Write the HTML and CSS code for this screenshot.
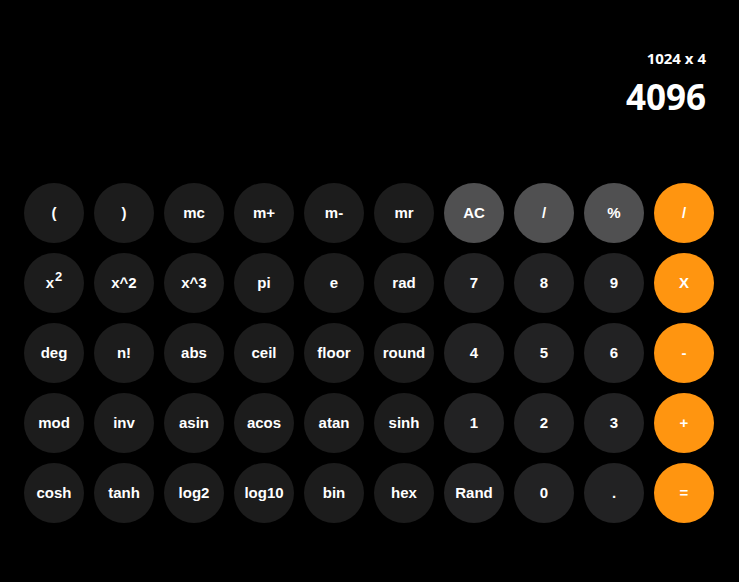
FILE: index.html
```html
<!DOCTYPE html>
<html>
<head>
<meta charset="utf-8">
<link rel="stylesheet" href="styles.css">
</head>
<body>
<div class="calc">
  <div class="display">
    <div class="expr">1024 x 4</div>
    <div class="result">4096</div>
  </div>
  <div class="keys">
    <button class="k fn">(</button>
    <button class="k fn">)</button>
    <button class="k fn">mc</button>
    <button class="k fn">m+</button>
    <button class="k fn">m-</button>
    <button class="k fn">mr</button>
    <button class="k gray">AC</button>
    <button class="k gray">/</button>
    <button class="k gray">%</button>
    <button class="k op">/</button>

    <button class="k fn"><span>x<sup>2</sup></span></button>
    <button class="k fn">x^2</button>
    <button class="k fn">x^3</button>
    <button class="k fn">pi</button>
    <button class="k fn">e</button>
    <button class="k fn">rad</button>
    <button class="k num">7</button>
    <button class="k num">8</button>
    <button class="k num">9</button>
    <button class="k op">X</button>

    <button class="k fn">deg</button>
    <button class="k fn">n!</button>
    <button class="k fn">abs</button>
    <button class="k fn">ceil</button>
    <button class="k fn">floor</button>
    <button class="k fn">round</button>
    <button class="k num">4</button>
    <button class="k num">5</button>
    <button class="k num">6</button>
    <button class="k op">-</button>

    <button class="k fn">mod</button>
    <button class="k fn">inv</button>
    <button class="k fn">asin</button>
    <button class="k fn">acos</button>
    <button class="k fn">atan</button>
    <button class="k fn">sinh</button>
    <button class="k num">1</button>
    <button class="k num">2</button>
    <button class="k num">3</button>
    <button class="k op">+</button>

    <button class="k fn">cosh</button>
    <button class="k fn">tanh</button>
    <button class="k fn">log2</button>
    <button class="k fn">log10</button>
    <button class="k fn">bin</button>
    <button class="k fn">hex</button>
    <button class="k num">Rand</button>
    <button class="k num">0</button>
    <button class="k num">.</button>
    <button class="k op">=</button>
  </div>
</div>
</body>
</html>
```
FILE: styles.css
```css
html, body {
  margin: 0;
  padding: 0;
  background: #000;
  height: 100%;
}
.calc {
  padding: 0 25px 0 24px;
  width: 690px;
}
.display {
  display: flex;
  flex-direction: column;
  align-items: flex-end;
  padding-right: 8px;
  padding-top: 48px;
  height: 134px;
  box-sizing: border-box;
  color: #fff;
  font-family: "Open Sans", sans-serif;
  font-weight: 700;
}
.expr {
  font-size: 15px;
  line-height: 20px;
}
.result {
  font-size: 35px;
  line-height: 48px;
  margin-top: 5px;
}
.keys {
  display: grid;
  grid-template-columns: repeat(10, 60px);
  grid-auto-rows: 60px;
  gap: 10px;
  padding-top: 49px;
}
.k {
  width: 60px;
  height: 60px;
  border: none;
  border-radius: 50%;
  padding: 0 0 2px 0;
  color: #fff;
  font-family: "Liberation Sans", Arial, sans-serif;
  font-weight: 700;
  font-size: 15px;
  display: flex;
  align-items: center;
  justify-content: center;
}
.k sup {
  font-size: 13px;
  line-height: 0;
  vertical-align: 7px;
  margin-left: 1px;
}
.fn { background: #1c1c1c; }
.num { background: #222223; }
.gray { background: #505051; }
.op { background: #ff9510; }
```
